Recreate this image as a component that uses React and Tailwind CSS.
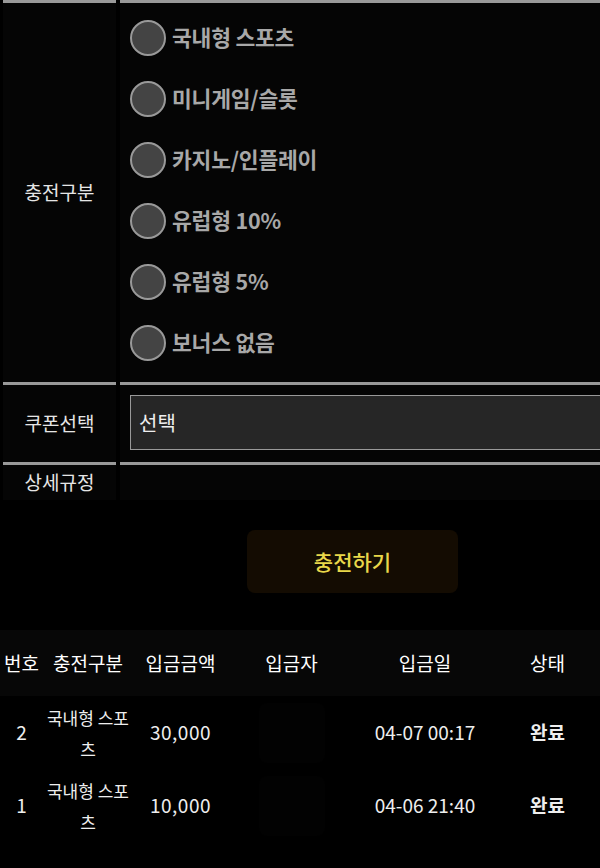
import React from 'react';

const options = ['국내형 스포츠', '미니게임/슬롯', '카지노/인플레이', '유럽형 10%', '유럽형 5%', '보너스 없음'];

const rows = [
  { no: 2, type: '국내형 스포츠', amount: '30,000', date: '04-07 00:17', status: '완료' },
  { no: 1, type: '국내형 스포츠', amount: '10,000', date: '04-06 21:40', status: '완료' },
];

const cols = 'grid grid-cols-[43px_90px_95px_127px_140px_105px]';

export default function App() {
  return (
    <div
      className="w-[600px] h-[868px] overflow-hidden bg-black text-white"
      style={{ fontFamily: '"Noto Sans CJK KR", "Noto Sans", sans-serif' }}
    >
      {/* form */}
      <div className="grid grid-cols-[113px_1fr] gap-x-[4px] pl-[3px] w-[700px]">
        <div className="border-t-[3px] border-[#999] bg-[#050505] h-[382px] flex items-center justify-center text-[19px] text-[#e6e6e6]">
          충전구분
        </div>
        <div className="border-t-[3px] border-[#999] bg-[#050505] h-[382px] pt-[4px] pl-[10px]">
          {options.map(o => (
            <div key={o} className="h-[61px] flex items-center gap-[6px]">
              <span className="w-[36px] h-[36px] rounded-full border-2 border-[#999] bg-[#444]" />
              <span className="text-[21.5px] font-bold text-[#a8a8a8] tracking-[-0.2px]">{o}</span>
            </div>
          ))}
        </div>

        <div className="border-t-[3px] border-[#999] bg-[#050505] h-[80px] flex items-center justify-center text-[19px] text-[#e6e6e6]">
          쿠폰선택
        </div>
        <div className="border-t-[3px] border-[#999] bg-[#050505] h-[80px] pt-[10px] pl-[10px]">
          <div className="h-[55px] w-[560px] border border-[#999] bg-[#262626] flex items-center pl-[8px] text-[20px] text-[#eee]">
            선택
          </div>
        </div>

        <div className="border-t-[3px] border-[#999] bg-[#050505] h-[38px] flex items-center justify-center text-[19px] text-[#e6e6e6]">
          상세규정
        </div>
        <div className="border-t-[3px] border-[#999] bg-[#050505] h-[38px]" />
      </div>

      {/* submit */}
      <div className="pt-[30px] pl-[247px]">
        <button className="w-[211px] h-[63px] rounded-[8px] bg-[#140c02] text-[#e9d74a] text-[21px] font-medium">
          충전하기
        </button>
      </div>

      {/* history */}
      <div className="mt-[37px]">
        <div className={`${cols} h-[66px] items-center text-center bg-[#070707] text-[19px] text-white`}>
          <span>번호</span>
          <span>충전구분</span>
          <span>입금금액</span>
          <span>입금자</span>
          <span>입금일</span>
          <span>상태</span>
        </div>
        {rows.map(r => (
          <div key={r.no} className={`${cols} h-[73px] items-center text-center text-[19px] text-[#eee]`}>
            <span>{r.no}</span>
            <span className="text-[17px] leading-[31px] px-[1px]">{r.type}</span>
            <span className="tracking-[0.5px]">{r.amount}</span>
            <span className="flex justify-center">
              <span className="w-[66px] h-[60px] rounded-[8px] bg-[#020202]" />
            </span>
            <span>{r.date}</span>
            <span className="font-bold">{r.status}</span>
          </div>
        ))}
      </div>
    </div>
  );
}
